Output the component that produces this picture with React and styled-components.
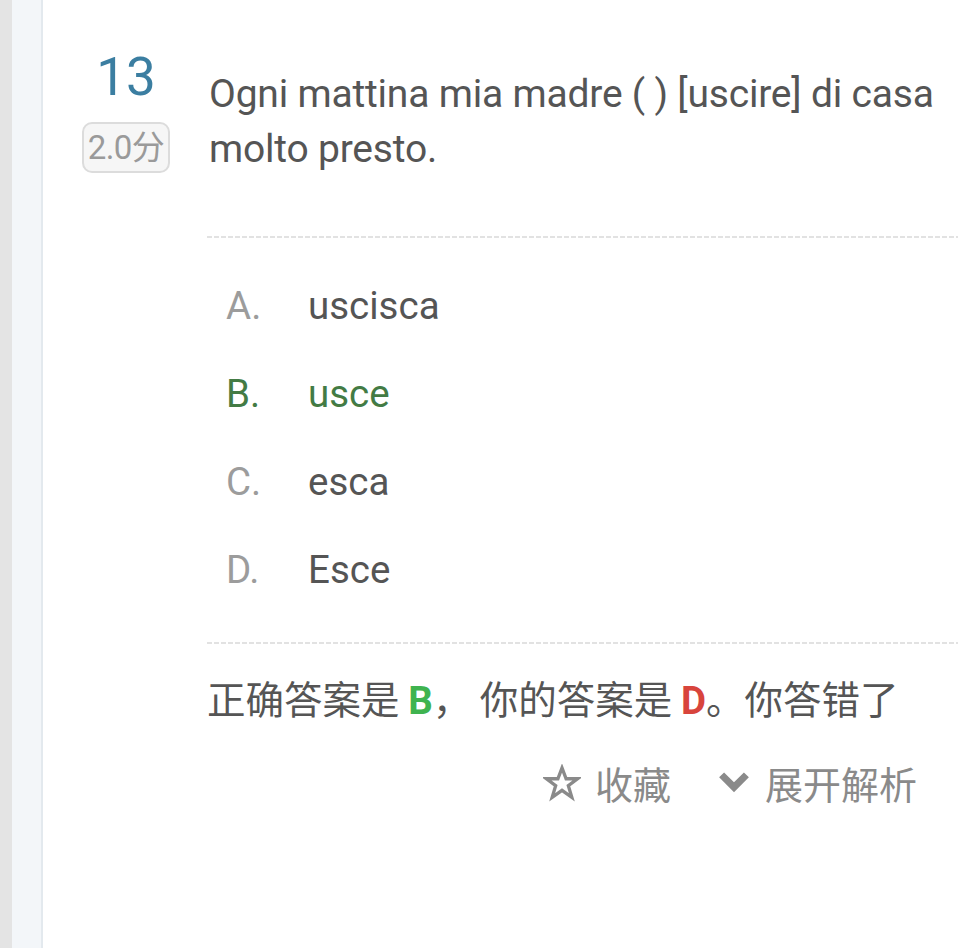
import React from "react";
import styled, { createGlobalStyle } from "styled-components";

const GlobalStyle = createGlobalStyle`
  html, body {
    margin: 0;
    padding: 0;
    background: #ffffff;
  }
  body {
    font-family: Roboto, "Noto Sans CJK SC", sans-serif;
  }
  * {
    box-sizing: border-box;
  }
`;

const Page = styled.div`
  display: flex;
  min-height: 948px;
  background: #fff;
`;

const Gutter = styled.div`
  width: 12px;
  background: #e4e4e4;
`;

const Rail = styled.div`
  width: 31px;
  background: #f3f6f9;
  border-right: 2px solid #e3e9ee;
`;

const Content = styled.div`
  flex: 1;
  padding-top: 46px;
  padding-right: 22px;
`;

const Header = styled.div`
  display: grid;
  grid-template-columns: 166px 1fr;
`;

const Meta = styled.div`
  display: flex;
  flex-direction: column;
  align-items: center;
`;

const Number = styled.div`
  font-size: 53px;
  line-height: 62px;
  color: #3b7ea1;
`;

const Score = styled.div`
  margin-top: 14px;
  padding: 0 4px;
  height: 51px;
  line-height: 47px;
  border: 2px solid #dcdcdc;
  border-radius: 10px;
  background: #f6f6f6;
  color: #9a9a9a;
  font-size: 33px;
  letter-spacing: -0.6px;
`;

const Question = styled.div`
  font-size: 39px;
  line-height: 55px;
  color: #555;
  padding-top: 21px;
  letter-spacing: -0.2px;
`;

const Body = styled.div`
  margin-left: 164px;
`;

const Divider = styled.div`
  height: 2px;
  margin-top: ${(p) => p.$top}px;
  background: repeating-linear-gradient(
    to right,
    #e2e2e2 0 5px,
    transparent 5px 7px
  );
`;

const Options = styled.div`
  display: flex;
  flex-direction: column;
  padding: 23px 0 29px 19px;
`;

const Option = styled.div`
  display: flex;
  height: 88px;
  align-items: center;
  font-size: 38.5px;
  color: ${(p) => (p.$correct ? "#437b44" : "#555")};
`;

const Letter = styled.span`
  width: 82px;
  color: ${(p) => (p.$correct ? "#437b44" : "#9c9c9c")};
`;

const Result = styled.div`
  margin-top: 28px;
  font-family: "Noto Sans CJK SC", sans-serif;
  font-size: 38.5px;
  line-height: 50px;
  color: #555;
  white-space: nowrap;
`;

const Mark = styled.b`
  font-family: Roboto, sans-serif;
  font-weight: 700;
  color: ${(p) => p.$color};
`;

const Actions = styled.div`
  display: flex;
  justify-content: flex-end;
  gap: 46px;
  margin-top: 34px;
  padding-right: 41px;
`;

const Action = styled.div`
  display: flex;
  align-items: center;
  gap: 14px;
  font-family: "Noto Sans CJK SC", sans-serif;
  font-size: 38px;
  line-height: 46px;
  color: #8a8a8a;
`;

const Star = () => (
  <svg width="38" height="38" viewBox="0 0 24 24" fill="none" stroke="#8a8a8a" strokeWidth="2.1" strokeLinejoin="miter">
    <polygon points="12,2.5 14.6,9.3 21.8,9.3 16,13.7 18.2,21 12,16.6 5.8,21 8,13.7 2.2,9.3 9.4,9.3" />
  </svg>
);

const Chevron = () => (
  <svg width="34" height="34" viewBox="0 0 24 24">
    <path d="M1.5 8 L5 4.5 L12 11.5 L19 4.5 L22.5 8 L12 18.5 Z" fill="#8a8a8a" />
  </svg>
);

const options = [
  { key: "A", text: "uscisca" },
  { key: "B", text: "usce", correct: true },
  { key: "C", text: "esca" },
  { key: "D", text: "Esce" },
];

export default function App() {
  return (
    <>
      <GlobalStyle />
      <Page>
        <Gutter />
        <Rail />
        <Content>
          <Header>
            <Meta>
              <Number>13</Number>
              <Score>2.0分</Score>
            </Meta>
            <Question>
              Ogni mattina mia madre ( ) [uscire] di casa molto presto.
            </Question>
          </Header>
          <Body>
            <Divider $top={59} />
            <Options>
              {options.map((o) => (
                <Option key={o.key} $correct={o.correct}>
                  <Letter $correct={o.correct}>{o.key}.</Letter>
                  {o.text}
                </Option>
              ))}
            </Options>
            <Divider $top={0} />
            <Result>
              正确答案是 <Mark $color="#3fb34f">B</Mark>， 你的答案是{" "}
              <Mark $color="#d8443c">D</Mark>。你答错了
            </Result>
            <Actions>
              <Action>
                <Star />
                收藏
              </Action>
              <Action>
                <Chevron />
                展开解析
              </Action>
            </Actions>
          </Body>
        </Content>
      </Page>
    </>
  );
}
